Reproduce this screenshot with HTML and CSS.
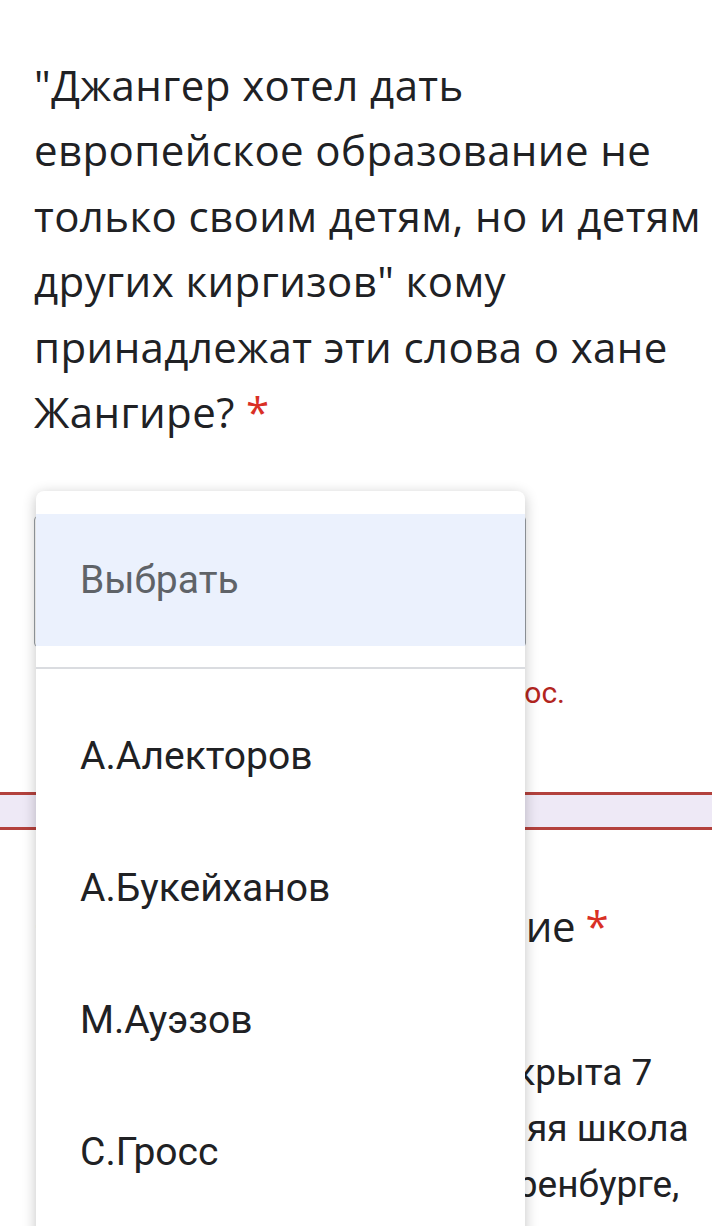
FILE: index.html
```html
<!DOCTYPE html>
<html lang="ru">
  <head>
    <meta charset="UTF-8" />
    <meta name="viewport" content="width=device-width, initial-scale=1.0">
    <title>Форма</title>
    <link rel="stylesheet" href="styles.css">
  </head>
  <body>
    <div class="form">
      <section class="card card-error">
        <h2 class="title">"Джангер хотел дать<br />
          европейское образование не<br />
          только своим детям, но и детям<br />
          других киргизов" кому<br />
          принадлежат эти слова о хане<br />
          Жангире? <span class="req">*</span></h2>
        <div class="select"></div>
        <p class="error">Это обязательный вопрос.</p>
      </section>

      <div class="gap"></div>

      <section class="card card-error">
        <h2 class="title title-tight">Отметьте верное решение <span class="req">*</span></h2>
        <p class="desc">
          В Букеевской Орде была открыта 7<br />
          декабря 1841 года, их средняя школа<br />
          для всех детей, как ещё в Оренбурге,
        </p>
      </section>
    </div>

    <!-- open dropdown over the select -->
    <div class="menu">
      <div class="menu-item selected">Выбрать</div>
      <div class="menu-sep"></div>
      <div class="menu-item">А.Алекторов</div>
      <div class="menu-item">А.Букейханов</div>
      <div class="menu-item">М.Ауэзов</div>
      <div class="menu-item">С.Гросс</div>
    </div>
  </body>
</html>
```

FILE: styles.css
```css
html, body {
  height: 100%;
  margin: 0;
}

body {
  position: relative;
  overflow: hidden;
  background: #fff;
  font-family: Roboto, "Liberation Sans", sans-serif;
  color: #202124;
}

.card {
  padding: 0 8px 0 34px;
  background: #fff;
}

.card-error:first-child {
  padding-top: 52px;
  padding-bottom: 81px;
  border-bottom: 3px solid #b3413d;
}

.card-error:last-child {
  padding-top: 63px;
  border-top: 3px solid #b3413d;
}

.gap {
  height: 32px;
  background: #eee9f6;
}

.title {
  margin: 0;
  font-family: "Open Sans", Roboto, sans-serif;
  font-size: 42px;
  font-weight: 400;
  letter-spacing: 0.4px;
  line-height: 65.4px;
  white-space: nowrap;
}

.title-tight {
  letter-spacing: -0.5px;
}

.req {
  color: #d93025;
}

.select {
  margin-top: 72px;
  width: 490px;
  height: 129px;
  border: 1px solid #9aa0a6;
  border-radius: 4px;
}

/* message ends just right of the open menu, as in the form */
.error {
  width: 531px;
  margin: 28px 0 0;
  font-size: 30px;
  line-height: 36px;
  text-align: right;
  color: #b3261e;
}

.desc {
  margin: 86px 0 0;
  padding-left: 2px;
  font-size: 37px;
  line-height: 56px;
  white-space: nowrap;
}

.menu {
  position: absolute;
  top: 491px;
  left: 36px;
  bottom: -20px;
  width: 489px;
  padding-top: 23px;
  background: #fff;
  border-radius: 8px;
  box-shadow: 0 3px 14px rgba(0, 0, 0, 0.24);
}

.menu-item {
  height: 132px;
  padding-left: 44px;
  display: flex;
  align-items: center;
  font-size: 39px;
}

.menu-item.selected {
  background: #ebf1fd;
  color: #5f6368;
}

.menu-sep {
  height: 2px;
  margin: 21px 0;
  background: #dadce0;
}
```
